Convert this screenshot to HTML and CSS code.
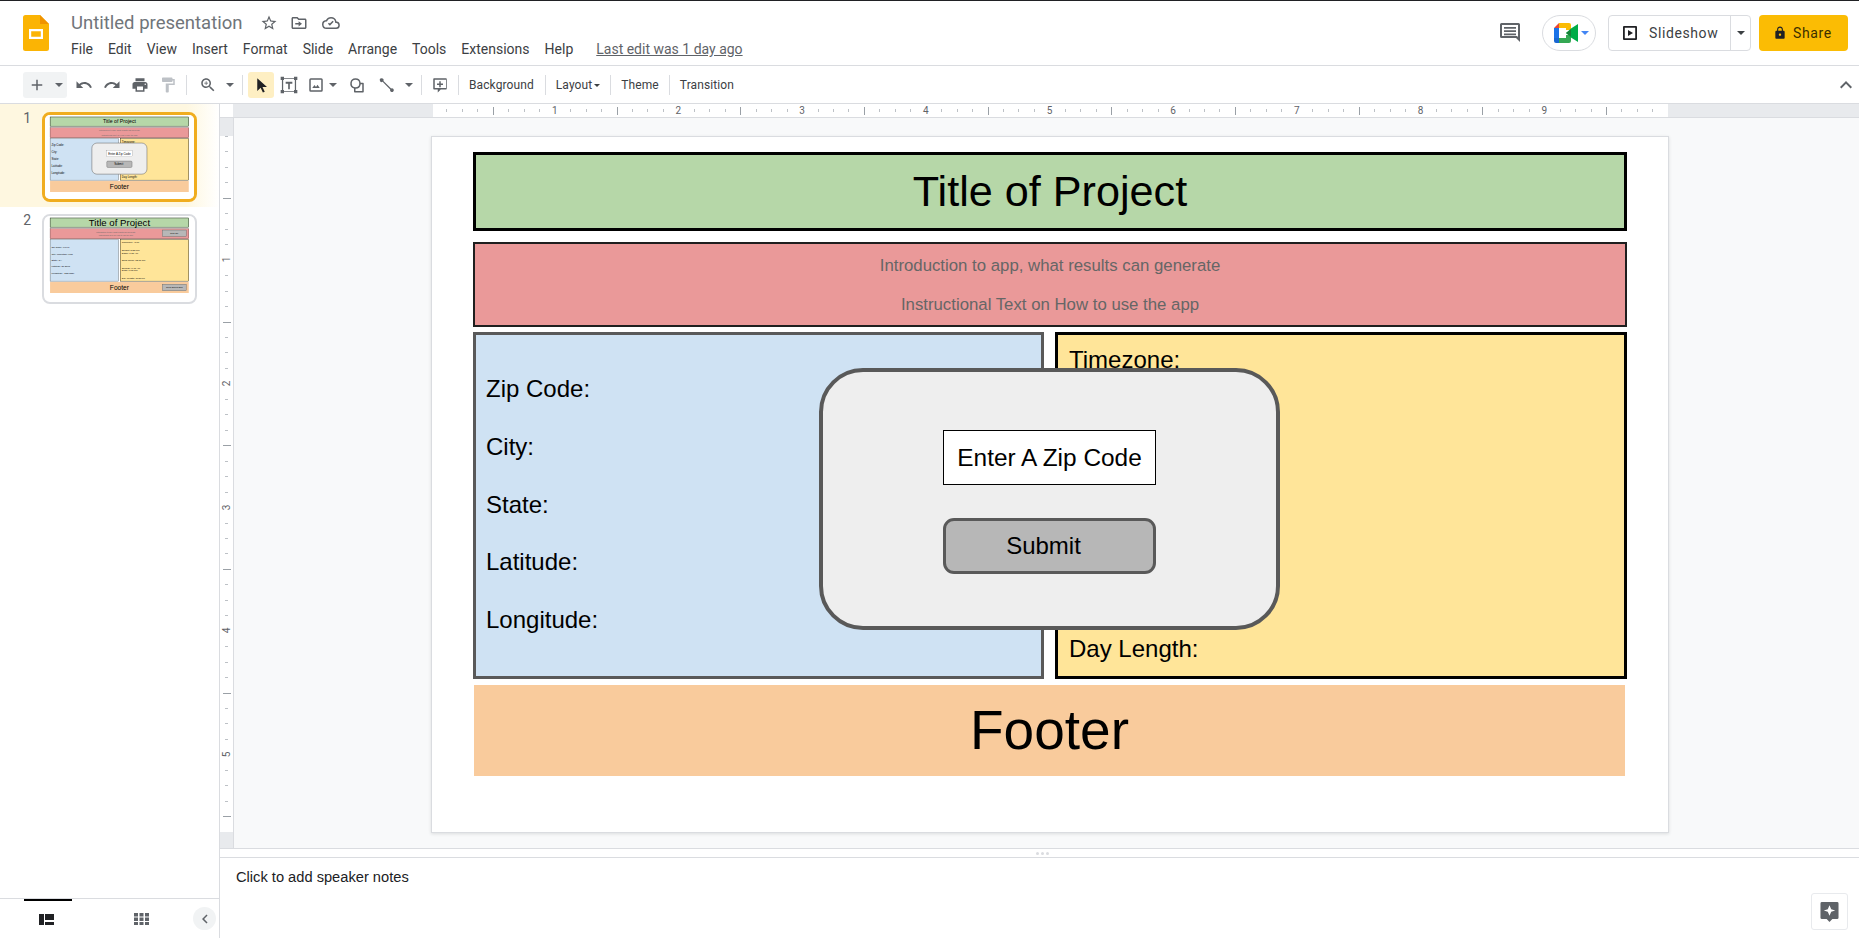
FILE: index.html
```html
<!DOCTYPE html>
<html lang="en">
<head>
    <meta charset="UTF-8">
    <title>Untitled presentation</title>
    <link rel="stylesheet" href="styles.css">
</head>
<body>
    <!-- Title bar -->
    <header class="topbar">
        <svg class="logo" viewBox="0 0 26 36" width="26" height="36">
            <path d="M2.5 0H17l9 9v24.5a2.5 2.5 0 0 1-2.5 2.5h-21A2.500 2.500 0 0 1 0 33.500v-31A2.500 2.500 0 0 1 2.500 0z" fill="#fbb404"/>
            <path d="M17 0l9 9h-9z" fill="#f09300"/>
            <path d="M6 14h14v10H6zm2.200 2.200v5.600h9.600v-5.600z" fill="#fff"/>
        </svg>
        <div class="doc-info">
            <div class="doc-title-row">
                <span class="doc-title">Untitled presentation</span>
                <svg class="title-icon star" viewBox="0 0 24 24"><path d="M22 9.240l-7.190-.62L12 2 9.190 8.630 2 9.240l5.460 4.730L5.820 21 12 17.270 18.180 21l-1.630-7.030L22 9.240zM12 15.400l-3.760 2.270 1-4.280-3.320-2.880 4.380-.38L12 6.100l1.710 4.040 4.380.38-3.320 2.880 1 4.280L12 15.400z"/></svg>
                <svg class="title-icon move" viewBox="0 0 24 24"><path d="M20 6h-8l-2-2H4c-1.100 0-2 .9-2 2v12c0 1.100.9 2 2 2h16c1.100 0 2-.9 2-2V8c0-1.100-.9-2-2-2zm0 12H4V6h5.200l2 2H20v10zm-8.500-1.500L16 13l-4.500-3.500V12H7v2h4.500v2.500z"/></svg>
                <svg class="title-icon cloud" viewBox="0 0 24 24"><path d="M19.350 10.040A7.490 7.490 0 0 0 12 4a7.500 7.500 0 0 0-6.650 4.040A6 6 0 0 0 6 20h13a5 5 0 0 0 .35-9.960zM19 18H6a4 4 0 0 1-.44-7.970l1.070-.11.500-.95A5.460 5.460 0 0 1 12 6a5.500 5.500 0 0 1 5.390 4.420l.3 1.500 1.530.11A3 3 0 0 1 19 18zm-8.500-2.500l-2.600-2.600 1.400-1.400 1.200 1.200 3.700-3.700 1.400 1.400z"/></svg>
            </div>
            <nav class="menu">
                <span>File</span>
                <span>Edit</span>
                <span>View</span>
                <span>Insert</span>
                <span>Format</span>
                <span>Slide</span>
                <span>Arrange</span>
                <span>Tools</span>
                <span>Extensions</span>
                <span>Help</span>
                <a class="last-edit">Last edit was 1 day ago</a>
            </nav>
        </div>
        <div class="top-actions">
            <svg class="comment-icon" viewBox="0 0 24 24" width="24" height="24"><path d="M3.500 3h17A1.500 1.500 0 0 1 22 4.500V22l-4-4H3.500A1.500 1.500 0 0 1 2 16.500v-12A1.500 1.500 0 0 1 3.500 3zM4 5v11h15l1 1V5zm2 2h12v1.800H6zm0 3.200h12V12H6zm0 3.200h12v1.800H6z" fill-rule="evenodd"/></svg>
            <div class="meet-btn">
                <svg viewBox="0 0 24 20" width="24" height="20">
                    <path d="M5 0L0 5h5z" fill="#ea4335"/>
                    <path d="M5 0h10a2 2 0 0 1 2 2v5h-5V5H5z" fill="#fbbc04"/>
                    <path d="M0 5h5v10H0z" fill="#1a73e8"/>
                    <path d="M0 15h5v5H2a2 2 0 0 1-2-2z" fill="#1967d2"/>
                    <path d="M5 15h7v-3h5v6a2 2 0 0 1-2 2H5z" fill="#34a853"/>
                    <path d="M12 10l5-4.500L24 1v18l-7-4.500z" fill="#00ac47"/>
                    <path d="M12 10l5-3.500v7z" fill="#188038"/>
                </svg>
                <span class="caret caret-blue"></span>
            </div>
            <div class="slideshow-btn">
                <div class="slideshow-main">
                    <svg viewBox="0 0 16 16" width="16" height="16"><path d="M2 1h12a1 1 0 0 1 1 1v12a1 1 0 0 1-1 1H2a1 1 0 0 1-1-1V2a1 1 0 0 1 1-1zm.8 1.800v10.400h10.400V2.800zM6 5l5 3-5 3z" fill-rule="evenodd" fill="#202124"/></svg>
                    <span>Slideshow</span>
                </div>
                <div class="slideshow-more"><span class="caret"></span></div>
            </div>
            <div class="share-btn">
                <svg viewBox="0 0 24 24" width="14" height="14"><path d="M18 8h-1V6c0-2.760-2.240-5-5-5S7 3.240 7 6v2H6c-1.100 0-2 .9-2 2v10c0 1.100.9 2 2 2h12c1.100 0 2-.9 2-2V10c0-1.100-.9-2-2-2zm-6 9c-1.100 0-2-.9-2-2s.9-2 2-2 2 .9 2 2-.9 2-2 2zm3.100-9H8.900V6c0-1.710 1.390-3.100 3.100-3.100 1.710 0 3.100 1.390 3.100 3.100v2z" fill="#202124"/></svg>
                <span>Share</span>
            </div>
        </div>
    </header>

    <!-- Toolbar -->
    <div class="toolbar">
        <div class="new-group">
            <svg class="tool-svg" viewBox="0 0 24 24"><path d="M19 13h-6v6h-2v-6H5v-2h6V5h2v6h6z"/></svg>
            <span class="caret"></span>
        </div>
        <div class="tool first-tool"><svg class="tool-svg" viewBox="0 0 24 24"><path d="M12.500 8c-2.650 0-5.050.99-6.900 2.600L2 7v9h9l-3.620-3.620c1.390-1.160 3.160-1.880 5.120-1.880 3.540 0 6.550 2.310 7.600 5.500l2.370-.78C21.080 11.030 17.150 8 12.500 8z"/></svg></div>
        <div class="tool"><svg class="tool-svg" viewBox="0 0 24 24"><path d="M18.400 10.600C16.550 8.990 14.150 8 11.500 8c-4.650 0-8.580 3.030-9.960 7.220L3.900 16c1.050-3.190 4.050-5.500 7.600-5.500 1.950 0 3.730.72 5.120 1.880L13 16h9V7l-3.600 3.600z"/></svg></div>
        <div class="tool"><svg class="tool-svg" viewBox="0 0 24 24"><path d="M19 8H5c-1.660 0-3 1.340-3 3v6h4v4h12v-4h4v-6c0-1.660-1.340-3-3-3zm-3 11H8v-5h8v5zm3-7c-.55 0-1-.45-1-1s.45-1 1-1 1 .45 1 1-.45 1-1 1zm-1-9H6v4h12V3z"/></svg></div>
        <div class="tool"><svg class="tool-svg faded" viewBox="0 0 24 24"><path d="M18 4V3c0-.55-.45-1-1-1H5c-.55 0-1 .45-1 1v4c0 .55.45 1 1 1h12c.55 0 1-.45 1-1V6h1v4H9v11c0 .55.45 1 1 1h2c.55 0 1-.45 1-1v-9h8V4h-3z"/></svg></div>
        <span class="sep sep-wide"></span>
        <div class="tool"><svg class="tool-svg" viewBox="0 0 24 24"><path d="M15.500 14h-.79l-.28-.27C15.410 12.590 16 11.110 16 9.500 16 5.910 13.090 3 9.500 3S3 5.910 3 9.500 5.910 16 9.500 16c1.610 0 3.090-.59 4.230-1.570l.27.28v.79l5 4.990L20.490 19l-4.990-5zm-6 0C7.010 14 5 11.990 5 9.500S7.010 5 9.500 5 14 7.010 14 9.500 11.990 14 9.500 14zM12 10h-2v2H9v-2H7V9h2V7h1v2h2z"/></svg></div>
        <div class="tool-arrow"><span class="caret"></span></div>
        <span class="sep"></span>
        <div class="tool selected"><svg class="tool-svg dark" viewBox="0 0 24 24"><path d="M7 3v17l4.500-4.500 3 6.500 2.500-1-3-6.500h6z"/></svg></div>
        <div class="tool"><svg class="tool-svg tool-big" viewBox="0 0 24 24"><path d="M2 2h4v1.500h12V2h4v4h-1.500v12H22v4h-4v-1.500H6V22H2v-4h1.500V6H2zm3 4v12h1v1.500h12V18h1V6h-1V4.500H6V6zm3 2h8v2.500h-3V17h-2v-6.500H8z" fill-rule="evenodd"/></svg></div>
        <div class="tool"><svg class="tool-svg" viewBox="0 0 24 24"><path d="M5 3h14a2 2 0 0 1 2 2v14a2 2 0 0 1-2 2H5a2 2 0 0 1-2-2V5a2 2 0 0 1 2-2zm0 2v14h14V5zm2 11l3-4 2 2.500 2-3 3 4.500z" fill-rule="evenodd"/></svg></div>
        <div class="tool-arrow arrow-tight"><span class="caret"></span></div>
        <div class="tool tool-gap"><svg class="tool-svg" viewBox="0 0 24 24"><path d="M10 3a7 7 0 0 1 6.900 5.900H20a1 1 0 0 1 1 1V21a1 1 0 0 1-1 1H9a1 1 0 0 1-1-1v-4.300A7 7 0 0 1 10 3zm0 2a5 5 0 1 0 0 10 5 5 0 0 0 0-10zm7 6a7 7 0 0 1-7 6v3h9v-9z" fill-rule="evenodd"/></svg></div>
        <div class="tool tool-gap"><svg class="tool-svg" viewBox="0 0 24 24"><path d="M5 3a2.500 2.500 0 0 1 2.300 3.500L17.500 16.700a2.500 2.500 0 1 1-1.200 1.200L6.100 7.700A2.500 2.500 0 1 1 5 3z"/></svg></div>
        <div class="tool-arrow"><span class="caret"></span></div>
        <span class="sep"></span>
        <div class="tool"><svg class="tool-svg" viewBox="0 0 24 24"><path d="M4 3h16a1 1 0 0 1 1 1v13a1 1 0 0 1-1 1h-7l-4 4v-4H4a1 1 0 0 1-1-1V4a1 1 0 0 1 1-1zm1 2v11h15V5zm6 2h2v3h3v2h-3v3h-2v-3H8v-2h3z" fill-rule="evenodd"/></svg></div>
        <span class="sep sep-text"></span>
        <span class="text-tool text-first">Background</span>
        <span class="sep sep-flat"></span>
        <span class="text-tool">Layout<span class="caret caret-small"></span></span>
        <span class="sep sep-flat"></span>
        <span class="text-tool">Theme</span>
        <span class="sep sep-flat"></span>
        <span class="text-tool">Transition</span>
        <svg class="collapse" viewBox="0 0 24 24" width="24" height="24"><path d="M7.400 15.400L12 10.800l4.600 4.600L18 14l-6-6-6 6z"/></svg>
    </div>

    <main class="main">
        <!-- Slide list -->
        <aside class="sidebar">
            <div class="slide-list">
                <div class="slide-row active">
                    <span class="slide-num">1</span>
                    <div class="thumb">
                        <div class="slide">
                            <div class="box title-box">Title of Project</div>
                            <div class="box intro-box">
                                <p>Introduction to app, what results can generate</p>
                                <p>Instructional Text on How to use the app</p>
                            </div>
                            <div class="info-grid">
                                <div class="box place-box">
                                    <p>Zip Code:</p>
                                    <p>City:</p>
                                    <p>State:</p>
                                    <p>Latitude:</p>
                                    <p>Longitude:</p>
                                </div>
                                <div class="box sun-box">
                                    <p>Timezone:</p>
                                    <p>Day Length:</p>
                                </div>
                            </div>
                            <div class="footer-box">Footer</div>
                            <div class="zip-modal">
                                <div class="zip-input">Enter A Zip Code</div>
                                <div class="zip-submit">Submit</div>
                            </div>
                        </div>
                    </div>
                </div>
                <div class="slide-row">
                    <span class="slide-num">2</span>
                    <div class="thumb">
                        <div class="slide results">
                            <div class="box title-box">Title of Project</div>
                            <div class="box intro-box">
                                <p>Introduction to app, what results can generate</p>
                                <p>Instructional Text on How to use the app</p>
                                <span class="slide-btn">New Zip</span>
                            </div>
                            <div class="info-grid">
                                <div class="box place-box">
                                    <p>Zip Code: 94040</p>
                                    <p>City: Mountain View</p>
                                    <p>State: CA</p>
                                    <p>Latitude: 37.3861</p>
                                    <p>Longitude: -122.0839</p>
                                </div>
                                <div class="box sun-box">
                                    <p>Timezone: -8:00</p>
                                    <p>Sunset: 5:35 PM<br>Dawn: 6:15 AM</p>
                                    <p>Solar Noon: 12:11 PM</p>
                                    <p>Sunrise: 6:45 AM<br>Dusk: 6:05 PM</p>
                                    <p>Day Length: 10:50:00</p>
                                </div>
                            </div>
                            <div class="footer-box">Footer<span class="slide-btn">Clear Saved Zips</span></div>
                        </div>
                    </div>
                </div>
            </div>
            <div class="view-bar">
                <div class="view-btn view-active">
                    <svg viewBox="0 0 16 12" width="16" height="12"><path d="M0 1h5v11H0zM6 1h9v6H6zM6 9h9v3H6z" fill="#202124"/></svg>
                </div>
                <div class="view-btn">
                    <svg viewBox="0 0 15 12" width="15" height="12"><path d="M0 0h4v3.500H0zM5.500 0h4v3.500h-4zM11 0h4v3.500h-4zM0 4.500h4V8H0zM5.500 4.500h4V8h-4zM11 4.500h4V8h-4zM0 9h4v3H0zM5.500 9h4v3h-4zM11 9h4v3h-4z" fill="#5f6368"/></svg>
                </div>
                <div class="hide-list">
                    <svg viewBox="0 0 24 24" width="18" height="18"><path d="M15.400 7.400L14 6l-6 6 6 6 1.400-1.400L10.800 12z" fill="#5f6368"/></svg>
                </div>
            </div>
        </aside>

        <div class="editor">
            <!-- Horizontal ruler -->
            <div class="ruler-h">
                <div class="ruler-h-gutter"></div>
                <div class="ruler-h-track">
                    <span class="mark"><span>1</span></span>
                    <span class="mark"><span>2</span></span>
                    <span class="mark"><span>3</span></span>
                    <span class="mark"><span>4</span></span>
                    <span class="mark"><span>5</span></span>
                    <span class="mark"><span>6</span></span>
                    <span class="mark"><span>7</span></span>
                    <span class="mark"><span>8</span></span>
                    <span class="mark"><span>9</span></span>
                </div>
                <div class="ruler-h-rest"></div>
            </div>

            <div class="workspace">
                <!-- Vertical ruler -->
                <div class="ruler-v">
                    <div class="ruler-v-gutter"></div>
                    <div class="ruler-v-track">
                        <span class="mark-v"><span>1</span></span>
                        <span class="mark-v"><span>2</span></span>
                        <span class="mark-v"><span>3</span></span>
                        <span class="mark-v"><span>4</span></span>
                        <span class="mark-v"><span>5</span></span>
                    </div>
                    <div class="ruler-v-end"></div>
                </div>

                <div class="canvas">
                    <div class="slide">
                        <div class="box title-box">Title of Project</div>
                        <div class="box intro-box">
                            <p>Introduction to app, what results can generate</p>
                            <p>Instructional Text on How to use the app</p>
                        </div>
                        <div class="info-grid">
                            <div class="box place-box">
                                <p>Zip Code:</p>
                                <p>City:</p>
                                <p>State:</p>
                                <p>Latitude:</p>
                                <p>Longitude:</p>
                            </div>
                            <div class="box sun-box">
                                <p>Timezone:</p>
                                <p>Day Length:</p>
                            </div>
                        </div>
                        <div class="footer-box">Footer</div>
                        <div class="zip-modal">
                            <div class="zip-input">Enter A Zip Code</div>
                            <div class="zip-submit">Submit</div>
                        </div>
                    </div>
                </div>
            </div>

            <div class="resize-bar"><i></i><i></i><i></i></div>

            <div class="notes">
                <span class="notes-text">Click to add speaker notes</span>
                <div class="explore-btn">
                    <svg viewBox="0 0 20 22" width="19" height="21"><path d="M2 1h16a1.500 1.500 0 0 1 1.500 1.500v15a1.500 1.500 0 0 1-1.500 1.500h-5l-3 3-3-3H2a1.500 1.500 0 0 1-1.500-1.500v-15A1.500 1.500 0 0 1 2 1zm8 3.500L8.200 8.700 4 10l4.200 1.300L10 15.500l1.800-4.200L16 10l-4.200-1.300z" fill-rule="evenodd" fill="#5f6368"/></svg>
                </div>
            </div>
        </div>
    </main>
</body>
</html>
```

FILE: styles.css
```css
/* Page */
* {
    box-sizing: border-box;
}

html, body {
    height: 100%;
}

body {
    margin: 0;
    display: flex;
    flex-direction: column;
    height: 938px;
    overflow: hidden;
    background-color: #fff;
    border-top: 1px solid #202124;
    font-family: Roboto, Arial, sans-serif;
    color: #202124;
}

/* Title bar */
.topbar {
    display: flex;
    flex: none;
    height: 65px;
    padding-left: 23px;
    border-bottom: 1px solid #dadce0;
}

.logo {
    flex: none;
    margin-top: 14px;
}

.doc-info {
    margin-left: 22px;
}

.doc-title-row {
    display: flex;
    align-items: center;
    height: 24px;
    margin-top: 10px;
}

.doc-title {
    width: 171px;
    font-size: 18.5px;
    color: #70757a;
    white-space: nowrap;
}

.title-icon {
    width: 18px;
    height: 18px;
    fill: #5f6368;
}

.star {
    margin-left: 18px;
}

.move {
    margin-left: 12px;
}

.cloud {
    margin-left: 14px;
}

.menu {
    display: flex;
    align-items: center;
    gap: 15px;
    height: 20px;
    margin-top: 4px;
    font-size: 14px;
    color: #3c4043;
    white-space: nowrap;
}

.last-edit {
    margin-left: 8px;
    font-size: 14px;
    color: #5f6368;
    text-decoration: underline;
}

.top-actions {
    display: flex;
    align-items: flex-start;
    margin-left: auto;
    padding: 14px 11px 0 0;
}

.comment-icon {
    margin: 5px 20px 0 0;
    fill: #5f6368;
}

.meet-btn {
    display: flex;
    align-items: center;
    gap: 3px;
    width: 54px;
    height: 36px;
    padding-left: 11px;
    margin-right: 12px;
    border: 1px solid #dadce0;
    border-radius: 18px;
}

.slideshow-btn {
    display: flex;
    width: 143px;
    height: 36px;
    margin-right: 8px;
    border: 1px solid #dadce0;
    border-radius: 4px;
    font-size: 14px;
    letter-spacing: 0.6px;
    color: #3c4043;
}

.slideshow-main {
    display: flex;
    align-items: center;
    gap: 11px;
    width: 122px;
    padding-left: 13px;
    border-right: 1px solid #dadce0;
}

.slideshow-more {
    display: flex;
    flex: 1;
    align-items: center;
    justify-content: center;
}

.share-btn {
    display: flex;
    align-items: center;
    gap: 6px;
    width: 89px;
    height: 36px;
    padding-left: 14px;
    background-color: #fbbc04;
    border-radius: 4px;
    font-size: 14px;
    letter-spacing: 0.6px;
    color: #3c2f00;
}

.caret {
    display: inline-block;
    width: 0;
    height: 0;
    border-left: 4px solid transparent;
    border-right: 4px solid transparent;
    border-top: 4px solid #3c4043;
}

.caret-blue {
    border-top-color: #4285f4;
}

.caret-small {
    margin-left: 2px;
    vertical-align: 2px;
    border-left-width: 3px;
    border-right-width: 3px;
    border-top-width: 3px;
}

/* Toolbar */
.toolbar {
    display: flex;
    flex: none;
    align-items: center;
    height: 38px;
    padding-left: 23px;
    border-bottom: 1px solid #dadce0;
}

.new-group {
    display: flex;
    align-items: center;
    gap: 9px;
    width: 44px;
    height: 26px;
    padding-left: 5px;
    background-color: #f1f3f4;
    border-radius: 3px;
}

.new-group .caret {
    border-top-color: #5f6368;
}

.tool {
    display: flex;
    flex: none;
    align-items: center;
    justify-content: center;
    width: 28px;
    height: 26px;
}

.first-tool {
    margin-left: 3px;
}

.tool-gap {
    margin-left: 2px;
}

.tool-svg {
    width: 18px;
    height: 18px;
    fill: #5f6368;
}

.tool-big {
    width: 20px;
    height: 20px;
    margin-left: 2px;
}

.tool-svg.faded {
    fill: #bdc1c6;
}

.tool-svg.dark {
    fill: #202124;
}

.tool.selected {
    width: 26px;
    margin-left: 1px;
    background-color: #feefc3;
    border-radius: 3px;
}

.tool-arrow {
    display: flex;
    flex: none;
    align-items: center;
    justify-content: center;
    width: 16px;
    height: 26px;
}

.tool-arrow .caret {
    border-top-color: #5f6368;
}

.arrow-tight {
    margin-left: -5px;
}

.sep {
    flex: none;
    width: 1px;
    height: 20px;
    margin: 0 4px;
    background-color: #dadce0;
}

.sep-wide {
    margin-right: 7px;
}

.sep-text {
    margin-right: 0;
}

.sep-flat {
    margin: 0;
}

.text-tool {
    padding: 0 10px;
    font-size: 12px;
    letter-spacing: 0.1px;
    color: #3c4043;
    white-space: nowrap;
}

.text-first {
    padding-right: 11px;
}

.collapse {
    margin-left: auto;
    margin-right: 1px;
    fill: #5f6368;
}

/* Layout below the toolbar */
.main {
    display: flex;
    flex: 1;
    min-height: 0;
}

/* Slide list */
.sidebar {
    display: flex;
    flex: none;
    flex-direction: column;
    width: 220px;
    border-right: 1px solid #dadce0;
}

.slide-list {
    flex: 1;
}

.slide-row {
    display: flex;
    height: 110px;
    padding-top: 7px;
}

.slide-row.active {
    height: 103px;
    padding-top: 8px;
    background: linear-gradient(90deg, #fef7e0 85%, #fff);
}

.slide-num {
    width: 42px;
    margin-top: -2px;
    padding-right: 11px;
    font-size: 14px;
    text-align: right;
    color: #5f6368;
}

.thumb {
    position: relative;
    width: 155px;
    height: 90px;
    overflow: hidden;
    background-color: #fff;
    border: 2px solid #dadce0;
    border-radius: 8px;
}

.active .thumb {
    border: 3px solid #f0ad1f;
}

.thumb .slide {
    position: absolute;
    top: 0;
    left: 1px;
    box-shadow: none;
    transform: scale(0.1205);
    transform-origin: top left;
}

.active .thumb .slide {
    left: 0;
}

.view-bar {
    display: flex;
    flex: none;
    align-items: center;
    height: 40px;
    border-top: 1px solid #dadce0;
}

.view-btn {
    position: relative;
    display: flex;
    align-items: center;
    justify-content: center;
    width: 48px;
    height: 100%;
}

.view-btn:first-child {
    margin-left: 24px;
    padding-right: 3px;
}

.view-btn:nth-child(2) {
    margin-left: 45px;
}

.view-active::before {
    content: "";
    position: absolute;
    top: 0;
    left: 0;
    right: 0;
    height: 2px;
    background-color: #000;
}

.hide-list {
    display: flex;
    align-items: center;
    justify-content: center;
    width: 23px;
    height: 23px;
    margin-left: 28px;
    background-color: #f1f3f4;
    border-radius: 50%;
}

/* Editor column */
.editor {
    display: flex;
    flex: 1;
    flex-direction: column;
    min-width: 0;
}

/* Rulers */
.ruler-h {
    display: flex;
    flex: none;
    height: 14px;
    border-bottom: 1px solid #dadce0;
}

.ruler-h-gutter {
    flex: none;
    width: 200px;
    margin-left: 13px;
    background-color: #e8eaed;
}

.ruler-h-track {
    display: flex;
    flex: none;
    width: 1235px;
    padding-left: 59.85px;
    font-size: 10px;
    line-height: 13px;
    color: #5f6368;
    background:
        repeating-linear-gradient(90deg, transparent 0 61.85px, #9aa0a6 61.85px 62.85px, transparent 62.85px 123.7px) -2px center / calc(100% + 2px) 8px no-repeat,
        repeating-linear-gradient(90deg, #bdc1c6 0 1px, transparent 1px 15.46px) -2px center / calc(100% + 2px) 3px no-repeat;
}

.mark {
    display: flex;
    flex: none;
    justify-content: center;
    width: 123.7px;
}

.mark span {
    padding: 0 2px;
    background-color: #fff;
}

.ruler-h-rest {
    flex: 1;
    background-color: #e8eaed;
}

.workspace {
    display: flex;
    flex: none;
    height: 730px;
}

.ruler-v {
    display: flex;
    flex: none;
    flex-direction: column;
    width: 14px;
    border-right: 1px solid #dadce0;
}

.ruler-v-gutter {
    flex: none;
    height: 18px;
    background-color: #e8eaed;
}

.ruler-v-track {
    flex: none;
    height: 696px;
    padding-top: 61.85px;
    font-size: 10px;
    color: #5f6368;
    background:
        repeating-linear-gradient(180deg, transparent 0 61.85px, #9aa0a6 61.85px 62.85px, transparent 62.85px 123.7px) center top / 8px 100% no-repeat,
        repeating-linear-gradient(180deg, #bdc1c6 0 1px, transparent 1px 15.46px) center top / 3px 100% no-repeat;
}

.mark-v {
    display: flex;
    align-items: center;
    justify-content: center;
    height: 123.7px;
}

.mark-v span {
    display: block;
    padding: 0 1px;
    line-height: 11px;
    background-color: #fff;
    transform: rotate(-90deg);
}

.ruler-v-end {
    flex: 1;
    background-color: #e8eaed;
}

.canvas {
    flex: 1;
    padding: 19px 0 0 198px;
    background-color: #f8f9fa;
}

/* Slide */
.slide {
    position: relative;
    width: 1236px;
    height: 695px;
    padding: 15px 0 0 41px;
    background-color: #fff;
    box-shadow: 0 0 0 1px #dadce0, 0 1px 3px 1px rgba(60, 64, 67, 0.15);
    font-family: "Liberation Sans", Arial, sans-serif;
    color: #000;
}

.slide p {
    margin: 0;
}

.box {
    border: 3px solid #000;
}

.title-box {
    display: flex;
    align-items: center;
    justify-content: center;
    width: 1154px;
    height: 79px;
    background-color: #b6d7a8;
    font-size: 43.2px;
}

.intro-box {
    position: relative;
    display: flex;
    flex-direction: column;
    justify-content: center;
    gap: 19px;
    width: 1154px;
    height: 85px;
    margin-top: 11px;
    padding-top: 2px;
    background-color: #ea9999;
    border-width: 2px;
    border-color: #1f1f1f;
    font-size: 16.8px;
    text-align: center;
    color: #666;
}

.info-grid {
    display: grid;
    grid-template-columns: 571px 572px;
    gap: 11px;
    height: 347px;
    margin-top: 5px;
}

.place-box {
    display: flex;
    flex-direction: column;
    justify-content: center;
    gap: 29.6px;
    padding: 0 10px 2px;
    background-color: #cfe2f3;
    border-color: #595959;
    font-size: 24px;
}

.sun-box {
    display: flex;
    flex-direction: column;
    justify-content: space-between;
    padding: 11px 11px 13px;
    background-color: #ffe599;
    font-size: 24px;
}

.footer-box {
    position: relative;
    width: 1151px;
    height: 91px;
    margin: 6px 0 0 1px;
    background-color: #f9cb9c;
    font-size: 55px;
    line-height: 91px;
    text-align: center;
}

/* Zip code popup, sits over the two info boxes */
.zip-modal {
    position: absolute;
    top: 231px;
    left: 387px;
    display: flex;
    flex-direction: column;
    align-items: center;
    width: 461px;
    height: 262px;
    padding-top: 58px;
    background-color: #eee;
    border: 4px solid #595959;
    border-radius: 44px;
}

.zip-input {
    width: 213px;
    height: 55px;
    background-color: #fff;
    border: 1px solid #000;
    font-size: 24.4px;
    line-height: 53px;
    text-align: center;
}

.zip-submit {
    width: 213px;
    height: 56px;
    margin-top: 33px;
    padding-right: 12px;
    background-color: #b7b7b7;
    border: 3px solid #595959;
    border-radius: 11px;
    font-size: 24px;
    line-height: 50px;
    text-align: center;
}

/* Second slide, results filled in */
.results .title-box {
    font-size: 80px;
}

.results .intro-box {
    gap: 8px;
    padding-right: 60px;
    font-size: 16px;
}

.results .place-box {
    gap: 30px;
    font-size: 20px;
}

.results .sun-box {
    font-size: 20px;
}

.slide-btn {
    position: absolute;
    right: 20px;
    width: 200px;
    height: 55px;
    background-color: #b7b7b7;
    border: 3px solid #595959;
    font-size: 18px;
    line-height: 49px;
    text-align: center;
    color: #000;
}

.intro-box .slide-btn {
    top: 8px;
}

.footer-box .slide-btn {
    top: 18px;
}

/* Bottom of the editor */
.resize-bar {
    display: flex;
    flex: none;
    align-items: center;
    justify-content: center;
    gap: 2px;
    height: 10px;
    padding-left: 5px;
    border-top: 1px solid #dadce0;
    border-bottom: 1px solid #dadce0;
}

.resize-bar i {
    width: 3px;
    height: 3px;
    background-color: #dadce0;
    border-radius: 50%;
}

.notes {
    display: flex;
    flex: 1;
    justify-content: space-between;
    padding: 9px 11px 0 16px;
}

.notes-text {
    font-family: "Liberation Sans", Arial, sans-serif;
    font-size: 14.67px;
    line-height: 20px;
}

.explore-btn {
    display: flex;
    align-items: center;
    justify-content: center;
    width: 37px;
    height: 37px;
    margin-top: 26px;
    border: 1px solid #e8eaed;
    border-radius: 3px;
}
```
